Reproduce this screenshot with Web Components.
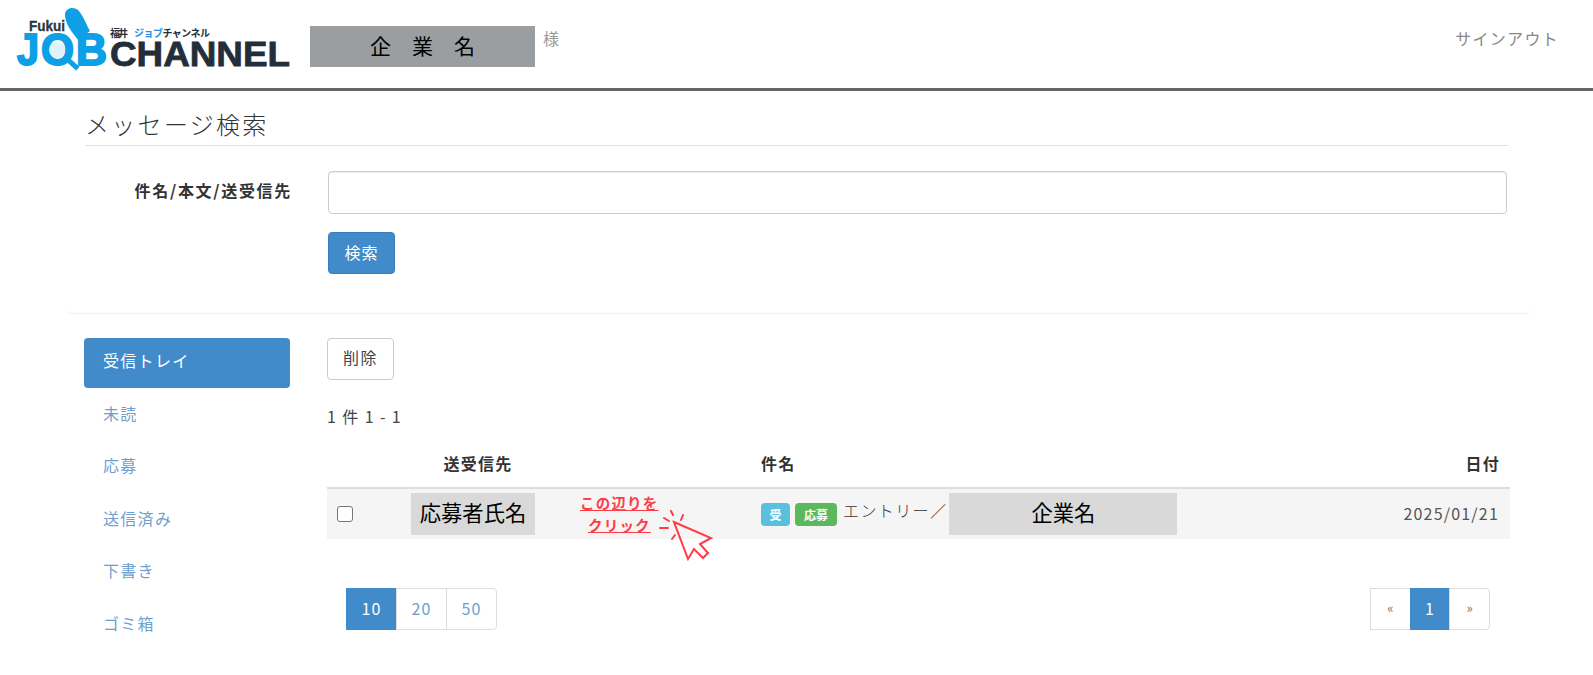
<!DOCTYPE html>
<html lang="ja">
<head>
<meta charset="utf-8">
<title>メッセージ検索</title>
<style>
  html, body { margin: 0; background: #fff; }
  body {
    font-family: "Noto Sans CJK JP", "Noto Sans", sans-serif;
    font-size: 16px;
    color: #333;
    letter-spacing: 1px;
  }
</style>
</head>
<body>
<job-header></job-header>
<search-panel></search-panel>
<message-area></message-area>

<script>
const headerTemplate = document.createElement("template");
headerTemplate.innerHTML = `
  <style>
    :host { display: flex; height: 88px; border-bottom: 3px solid #666; align-items: flex-start; }
    svg { margin: 4px 0 0 16px; flex: none; }
    .company {
      margin: 26px 0 0 19px; width: 225px; height: 41px; background: #9a9ea1;
      color: #000; font-size: 21px; text-align: center; line-height: 38px; letter-spacing: 0;
      white-space: pre;
    }
    .sama { margin: 26px 0 0 8px; color: #999; font-size: 16px; line-height: 24px; }
    .out { margin: 26px 34px 0 auto; color: #888; font-size: 16px; line-height: 24px; letter-spacing: 1.3px; }
  </style>
  <svg width="275" height="76" viewBox="0 0 275 76" aria-label="Fukui JOB CHANNEL">
    <g font-family="Liberation Sans" font-weight="700" letter-spacing="0">
      <text x="13" y="27" font-size="14" fill="#2a3540" stroke="#2a3540" stroke-width=".3" textLength="36" lengthAdjust="spacingAndGlyphs">Fukui</text>
      <g font-size="44" fill="#0ea0e6" stroke="#0ea0e6" stroke-width="2">
        <text x="1" y="61" textLength="22" lengthAdjust="spacingAndGlyphs">J</text>
        <text x="25" y="61" textLength="33" lengthAdjust="spacingAndGlyphs">O</text>
        <text x="60" y="61" textLength="31" lengthAdjust="spacingAndGlyphs">B</text>
      </g>
      <text x="94" y="62" font-size="35" fill="#222e39" stroke="#222e39" stroke-width=".8" textLength="180" lengthAdjust="spacingAndGlyphs">CHANNEL</text>
    </g>
    <path d="M49 11 C49 4 57 2 62 6 C67 11 70 20 74 27 L62 36 C56 28 49 20 49 11Z" fill="#0ea0e6"/>
    <circle cx="41" cy="46" r="8" fill="#dff3fc"/>
    <path d="M50 54 L60 63" stroke="#0ea0e6" stroke-width="5" stroke-linecap="square"/>
    <g font-family="Noto Sans CJK JP" font-weight="700" font-size="10" letter-spacing="0">
      <text x="94" y="33" fill="#222e39" textLength="18">福井</text>
      <text x="118" y="33" fill="#2a8ee0" textLength="76">ジョブ<tspan fill="#222e39">チャンネル</tspan></text>
    </g>
  </svg>
  <div class="company">企　業　名</div>
  <div class="sama">様</div>
  <div class="out">サインアウト</div>
`;

class JobHeader extends HTMLElement {
  constructor() {
    super();
    this.attachShadow({ mode: "open" });
    this.shadowRoot.appendChild(headerTemplate.content.cloneNode(true));
  }
}

const searchTemplate = document.createElement("template");
searchTemplate.innerHTML = `
  <style>
    :host { display: block; margin: 0 62px 0 65px; padding: 0 23px 39px 20px; border-bottom: 1px solid #f1f1f1; border-radius: 0 0 6px 6px; }
    h2 { margin: 0; height: 55px; line-height: 66px; font-size: 24px; font-weight: 300; border-bottom: 1px solid #e2e2e2; letter-spacing: 2.3px; color: #333; box-sizing: border-box; }
    .row { display: flex; margin-top: 25px; }
    label { width: 207px; flex: none; text-align: right; font-weight: 700; line-height: 39px; letter-spacing: 1.7px; white-space: nowrap; }
    input { margin: 0 1px 0 36px; flex: 1; height: 43px; box-sizing: border-box; border: 1px solid #ccc; border-radius: 4px; box-shadow: inset 0 1px 1px rgba(0,0,0,.075); }
    button { margin: 18px 0 0 243px; display: block; width: 67px; height: 42px; background: #428bca; color: #fff; border: 1px solid #357ebd; border-radius: 4px; font: inherit; letter-spacing: 1px; padding: 0 0 3px; }
  </style>
  <h2>メッセージ検索</h2>
  <div class="row"><label>件名/本文/送受信先</label><input type="text"></div>
  <button>検索</button>
`;

class SearchPanel extends HTMLElement {
  constructor() {
    super();
    this.attachShadow({ mode: "open" });
    this.shadowRoot.appendChild(searchTemplate.content.cloneNode(true));
  }
}

const menuTemplate = document.createElement("template");
menuTemplate.innerHTML = `
  <style>
    :host { display: flex; flex-direction: column; gap: 2.5px; width: 206px; flex: none; }
    a { display: block; height: 50px; line-height: 44px; padding-left: 19px; border-radius: 4px; color: #6f9fd0; letter-spacing: 1.3px; }
    a.on { background: #428bca; color: #fff; }
  </style>
  <a class="on">受信トレイ</a>
  <a>未読</a>
  <a>応募</a>
  <a>送信済み</a>
  <a>下書き</a>
  <a>ゴミ箱</a>
`;

class SideMenu extends HTMLElement {
  constructor() {
    super();
    this.attachShadow({ mode: "open" });
    this.shadowRoot.appendChild(menuTemplate.content.cloneNode(true));
  }
}

const hintTemplate = document.createElement("template");
hintTemplate.innerHTML = `
  <style>
    :host { position: absolute; left: 253px; top: 4px; width: 140px; height: 70px; display: block; color: #ff3b47; }
    p { margin: 0; position: absolute; font-size: 14.5px; font-weight: 700; line-height: 20px; letter-spacing: 1.2px; text-decoration: underline; white-space: nowrap; }
    .a { left: 0; top: 0; }
    .b { left: 8px; top: 22px; }
    svg { position: absolute; left: 78px; top: 14px; }
  </style>
  <p class="a">この辺りを</p>
  <p class="b">クリック</p>
  <svg width="56" height="56" viewBox="0 0 56 56" fill="none" stroke="#ff3b47" stroke-width="2" stroke-linecap="round" stroke-linejoin="miter">
    <path d="M16 15 L53 31 L42 37 L50 46 L45 51 L36 42 L30 52 Z"/>
    <path d="M13 4 L15 8 M25 8 L23 13 M6 11 L11 14 M2 21 L10 21 M14 32 L17 28"/>
  </svg>
`;

class ClickHint extends HTMLElement {
  constructor() {
    super();
    this.attachShadow({ mode: "open" });
    this.shadowRoot.appendChild(hintTemplate.content.cloneNode(true));
  }
}

const tableTemplate = document.createElement("template");
tableTemplate.innerHTML = `
  <style>
    :host { display: block; }
    .head, .row { display: grid; grid-template-columns: 84px 124px 226px 1fr auto; align-items: center; }
    .head { height: 49px; border-bottom: 2px solid #ddd; font-weight: 700; letter-spacing: 1.3px; }
    .head div:nth-child(2) { text-align: center; padding-left: 10px; white-space: nowrap; }
    .head div:last-child { padding-right: 10px; }
    .row { position: relative; height: 50px; background: #f5f5f5; }
    .check { width: 16px; height: 16px; border: 1px solid #767676; border-radius: 3px; margin-left: 10px; box-sizing: border-box; background: #fff; }
    .mask { background: #d9d9d9; color: #000; font-size: 21.3px; height: 42px; line-height: 37px; text-align: center; letter-spacing: 0; }
    .subject { display: flex; align-items: center; }
    .badge { height: 23px; line-height: 23px; border-radius: 4px; color: #fff; font-size: 12px; font-weight: 700; text-align: center; letter-spacing: 0; box-sizing: border-box; margin-right: 5px; }
    .info { background: #5bc0de; width: 29px; }
    .green { background: #5cb85c; width: 42px; }
    .text { color: #333; margin: 0 2px 8px 1px; letter-spacing: 1.4px; white-space: nowrap; font-weight: 300; }
    .subject .mask { width: 228px; }
    .date { padding-right: 11px; color: #555; letter-spacing: 1.2px; margin-bottom: 3px; }
  </style>
  <div class="head"><div></div><div>送受信先</div><div></div><div>件名</div><div>日付</div></div>
  <div class="row">
    <div class="check"></div>
    <div class="mask">応募者氏名</div>
    <div></div>
    <div class="subject">
      <span class="badge info">受</span><span class="badge green">応募</span><span class="text">エントリー／</span><span class="mask">企業名</span>
    </div>
    <div class="date">2025/01/21</div>
    <click-hint></click-hint>
  </div>
`;

class MessageTable extends HTMLElement {
  constructor() {
    super();
    this.attachShadow({ mode: "open" });
    this.shadowRoot.appendChild(tableTemplate.content.cloneNode(true));
  }
}

const pagerTemplate = document.createElement("template");
pagerTemplate.innerHTML = `
  <style>
    :host { display: inline-flex; height: 42px; }
    span { display: block; border: 1px solid #ddd; margin-left: -1px; box-sizing: border-box; height: 42px; line-height: 38px; text-align: center; color: #6f9fd0; letter-spacing: 1px; background: #fff; }
    span:first-child { margin-left: 0; border-radius: 4px 0 0 4px; }
    span:last-child { border-radius: 0 4px 4px 0; }
    span.on { background: #428bca; border-color: #428bca; color: #fff; }
    span.arrow { color: #777; font-size: 13px; letter-spacing: 0; }
  </style>
`;

class PagerGroup extends HTMLElement {
  constructor() {
    super();
    this.attachShadow({ mode: "open" });
    this.shadowRoot.appendChild(pagerTemplate.content.cloneNode(true));
  }

  connectedCallback() {
    const active = this.getAttribute("active");
    const width = this.getAttribute("item-width");
    this.getAttribute("items").split(",").forEach((label) => {
      const item = document.createElement("span");
      item.textContent = label;
      item.style.width = width + "px";
      if (label === active) item.className = "on";
      if (label === "«" || label === "»") item.className = "arrow";
      this.shadowRoot.appendChild(item);
    });
  }
}

const areaTemplate = document.createElement("template");
areaTemplate.innerHTML = `
  <style>
    :host { display: flex; margin: 24px 83px 0 84px; gap: 37px; }
    .main { flex: 1; min-width: 0; }
    .del { display: block; width: 67px; height: 42px; background: #fff; border: 1px solid #ccc; border-radius: 4px; color: #444; font: inherit; letter-spacing: 1.4px; padding: 0 0 4px; }
    .count { margin: 23px 0 0; line-height: 26px; color: #444; height: 35px; letter-spacing: 1.4px; }
    .pagers { display: flex; justify-content: space-between; margin: 49px 20px 0; }
  </style>
  <side-menu></side-menu>
  <div class="main">
    <button class="del">削除</button>
    <div class="count">1 件 1 - 1</div>
    <message-table></message-table>
    <div class="pagers">
      <pager-group items="10,20,50" active="10" item-width="51"></pager-group>
      <pager-group items="«,1,»" active="1" item-width="40.7"></pager-group>
    </div>
  </div>
`;

class MessageArea extends HTMLElement {
  constructor() {
    super();
    this.attachShadow({ mode: "open" });
    this.shadowRoot.appendChild(areaTemplate.content.cloneNode(true));
  }
}

window.customElements.define("job-header", JobHeader);
window.customElements.define("search-panel", SearchPanel);
window.customElements.define("side-menu", SideMenu);
window.customElements.define("click-hint", ClickHint);
window.customElements.define("message-table", MessageTable);
window.customElements.define("pager-group", PagerGroup);
window.customElements.define("message-area", MessageArea);
</script>
</body>
</html>
